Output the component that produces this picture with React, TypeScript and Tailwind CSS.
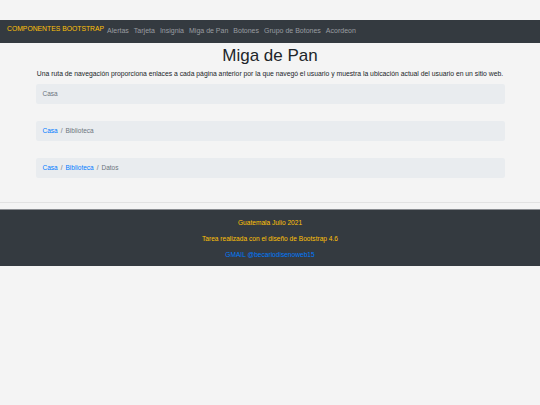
import React from 'react';

const links = ['Alertas', 'Tarjeta', 'Insignia', 'Miga de Pan', 'Botones', 'Grupo de Botones', 'Acordeon'];

const Sep = () => <span className="px-[3px] text-[#6c757d]">/</span>;

export default function App() {
  return (
    <div className="min-h-[405px] bg-[#f4f4f4] font-['Liberation_Sans',Arial,sans-serif]">
      <div className="h-[20px]" />

      {/* Navbar */}
      <nav className="flex h-[23px] items-center bg-[#343a40] px-[7px]">
        <span className="mr-[3px] -mt-[4px] text-[6.8px] text-[#ffc107]">COMPONENTES BOOTSTRAP</span>
        <ul className="flex gap-[5px] text-[7px] text-[#9a9da1]">
          {links.map(l => (
            <li key={l}>{l}</li>
          ))}
        </ul>
      </nav>

      {/* Content */}
      <main className="mx-auto flex w-[469px] flex-col">
        <h1 className="mt-[3px] text-center text-[17px] leading-[20px] text-[#212529]">Miga de Pan</h1>
        <p className="mt-[3px] text-center text-[6.8px] leading-[10px] text-[#212529] whitespace-nowrap">
          Una ruta de navegación proporciona enlaces a cada página anterior por la que navegó el usuario y muestra la ubicación actual del usuario en un sitio web.
        </p>

        <div className="mt-[5px] flex h-[20px] items-center rounded-[2px] bg-[#e9ecef] px-[7px] text-[6.5px] text-[#6c757d]">
          Casa
        </div>

        <div className="mt-[17px] flex h-[20px] items-center rounded-[2px] bg-[#e9ecef] px-[7px] text-[6.5px] text-[#6c757d]">
          <span className="text-[#007bff]">Casa</span>
          <Sep />
          <span>Biblioteca</span>
        </div>

        <div className="mt-[17px] flex h-[20px] items-center rounded-[2px] bg-[#e9ecef] px-[7px] text-[6.5px] text-[#6c757d]">
          <span className="text-[#007bff]">Casa</span>
          <Sep />
          <span className="text-[#007bff]">Biblioteca</span>
          <Sep />
          <span>Datos</span>
        </div>
      </main>

      <hr className="mt-[24px] border-t border-[#e2e2e2]" />

      {/* Footer */}
      <footer className="mt-[6px] flex h-[57px] flex-col items-center justify-center gap-[7px] border-t border-[#8a8d91] bg-[#343a40] text-[6.6px] leading-[9px]">
        <p className="text-[#ffc107]">Guatemala Julio 2021</p>
        <p className="text-[#ffc107]">Tarea realizada con el diseño de Bootstrap 4.6</p>
        <p className="text-[#007bff]">GMAIL @becariodisenoweb15</p>
      </footer>
    </div>
  );
}
